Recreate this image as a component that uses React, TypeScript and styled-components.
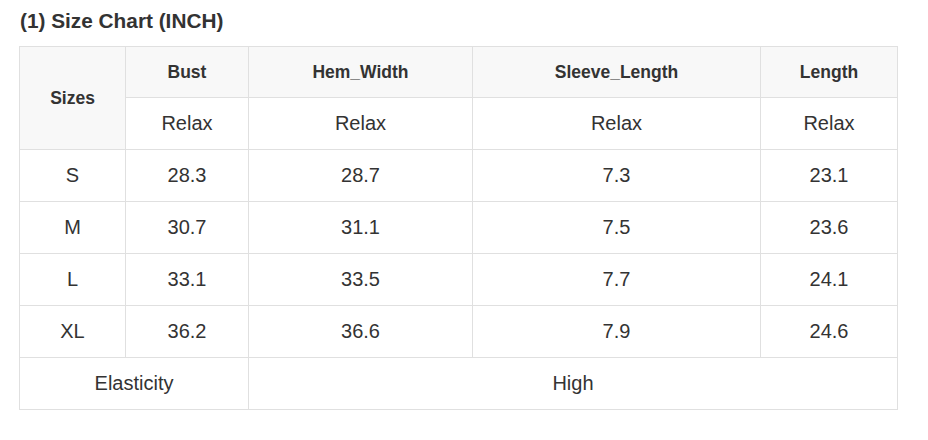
import React from "react";
import styled, { createGlobalStyle } from "styled-components";

const Global = createGlobalStyle`
  html, body { margin: 0; padding: 0; background: #ffffff; }
  body { font-family: "Liberation Sans", Arial, Helvetica, sans-serif; color: #333333; }
`;

const Page = styled.div`
  padding: 9px 0 0 19px;
  width: 879px;
`;

const Title = styled.h3`
  margin: 0 0 13px 1px;
  font-size: 20.8px;
  line-height: 24px;
  font-weight: 700;
  color: #333333;
`;

const Table = styled.table`
  border-collapse: collapse;
  table-layout: fixed;
  width: 879px;
`;

const Col = styled.col<{ $w: number }>`
  width: ${(p) => p.$w}px;
`;

const Row = styled.tr<{ $h?: number }>`
  height: ${(p) => p.$h ?? 52}px;
`;

const Head = styled.th`
  background: #f8f8f8;
  border: 1px solid #e0e0e0;
  font-size: 17.5px;
  font-weight: 700;
  color: #333333;
  text-align: center;
  vertical-align: middle;
  padding: 0;
`;

const Cell = styled.td`
  background: #ffffff;
  border: 1px solid #e0e0e0;
  font-size: 20px;
  font-weight: 400;
  color: #333333;
  text-align: center;
  vertical-align: middle;
  padding: 0;
`;

const columns = ["Bust", "Hem_Width", "Sleeve_Length", "Length"];
const widths = [106, 123, 224, 288, 137];
const rows: [string, string, string, string, string][] = [
  ["S", "28.3", "28.7", "7.3", "23.1"],
  ["M", "30.7", "31.1", "7.5", "23.6"],
  ["L", "33.1", "33.5", "7.7", "24.1"],
  ["XL", "36.2", "36.6", "7.9", "24.6"],
];

export default function App() {
  return (
    <>
      <Global />
      <Page>
        <Title>(1) Size Chart (INCH)</Title>
        <Table>
          <colgroup>
            {widths.map((w, i) => (
              <Col key={i} $w={w} />
            ))}
          </colgroup>
          <tbody>
            <Row $h={51}>
              <Head rowSpan={2}>Sizes</Head>
              {columns.map((c) => (
                <Head key={c}>{c}</Head>
              ))}
            </Row>
            <Row>
              {columns.map((c) => (
                <Cell key={c}>Relax</Cell>
              ))}
            </Row>
            {rows.map((r) => (
              <Row key={r[0]}>
                {r.map((v, i) => (
                  <Cell key={i}>{v}</Cell>
                ))}
              </Row>
            ))}
            <Row>
              <Cell colSpan={2}>Elasticity</Cell>
              <Cell colSpan={3}>High</Cell>
            </Row>
          </tbody>
        </Table>
      </Page>
    </>
  );
}
